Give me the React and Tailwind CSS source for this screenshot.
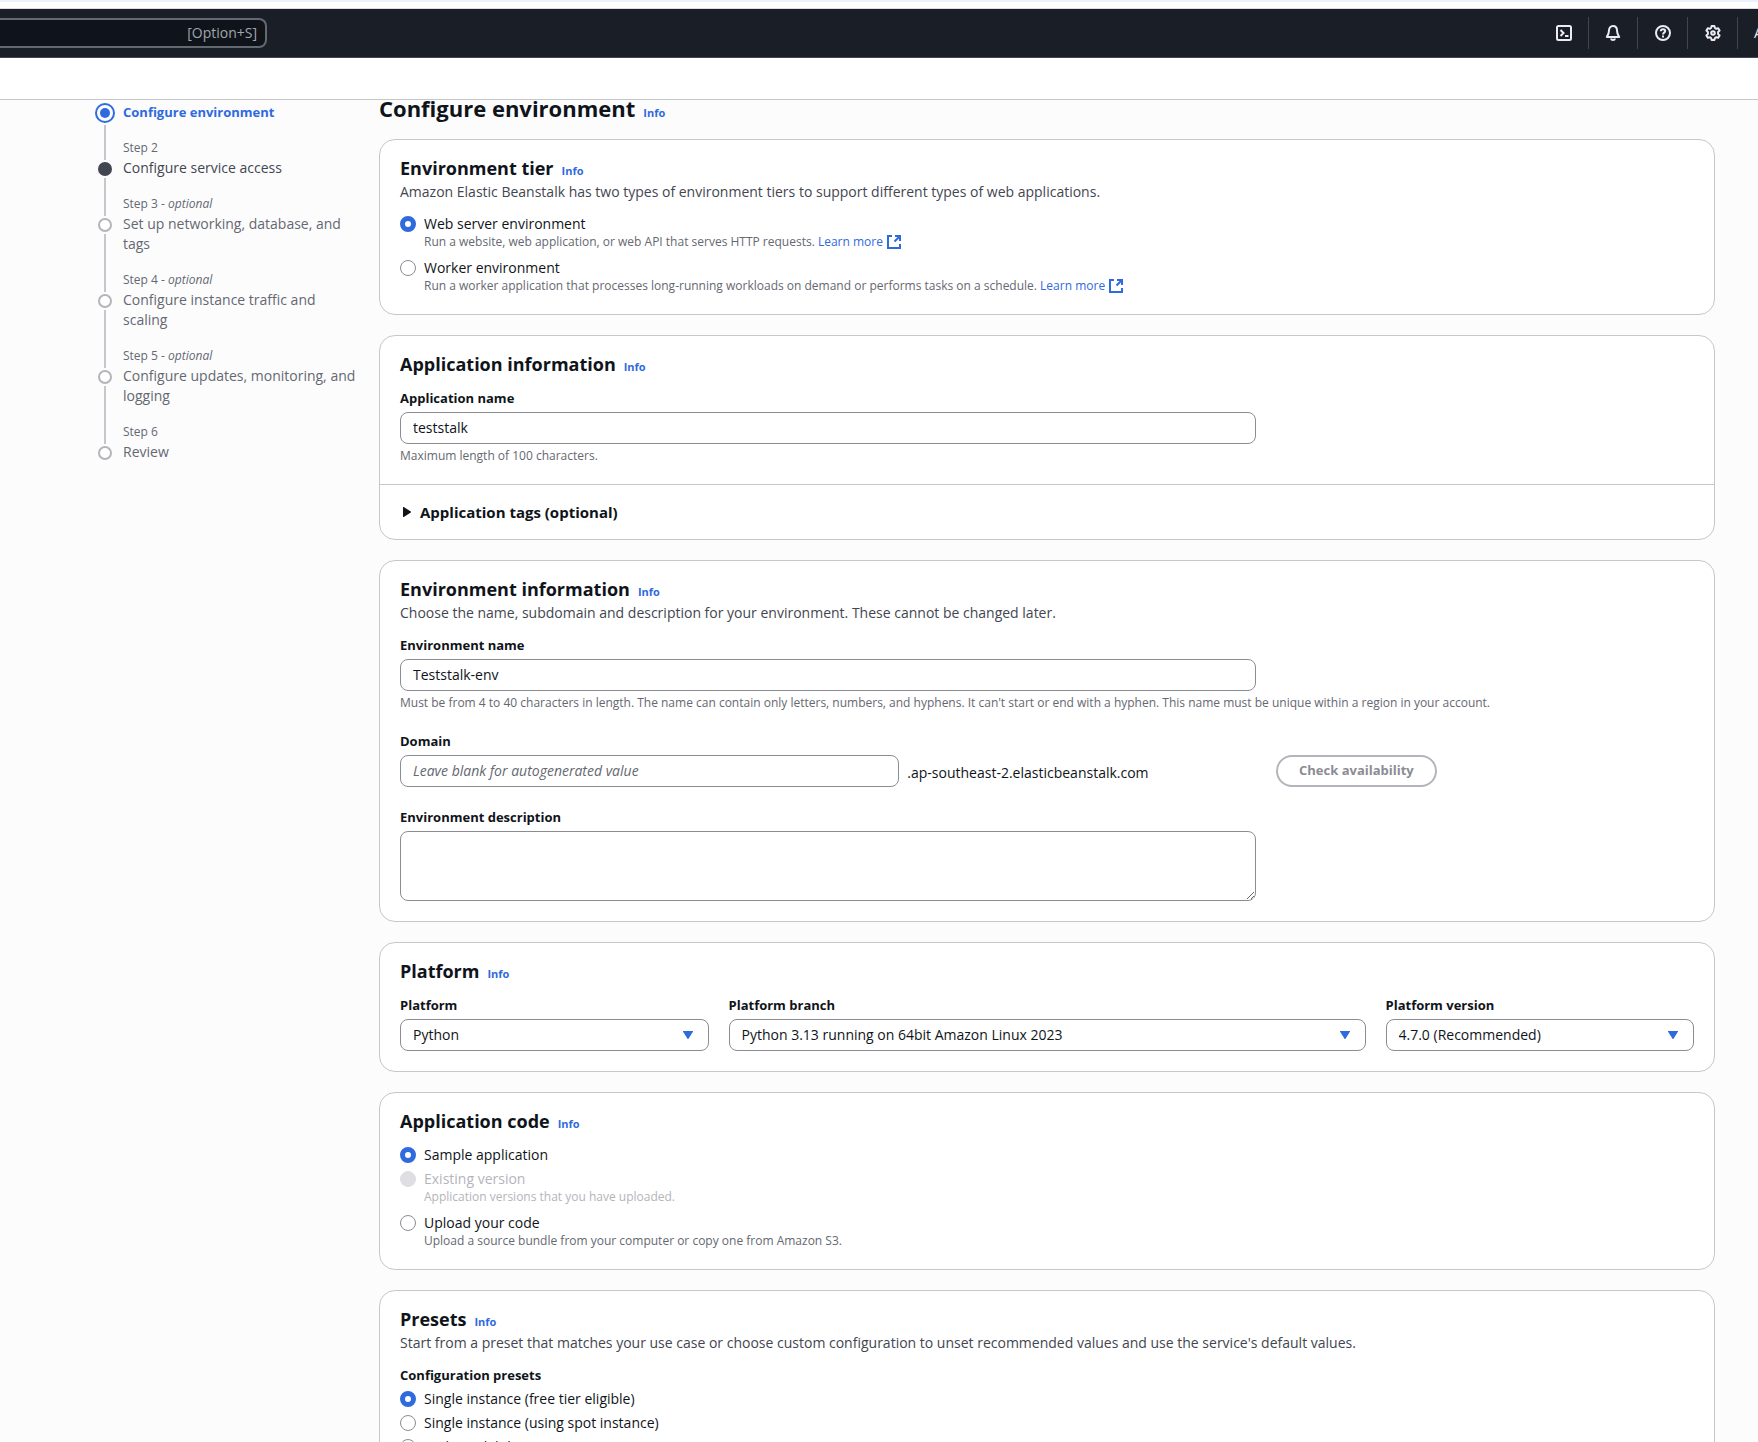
import React, { useState } from "react";
import clsx from "clsx";

const steps = [
  { title: "Configure environment", state: "active" },
  { title: "Configure service access", state: "visited" },
  {
    title: "Set up networking, database, and tags",
    optional: true,
    state: "pending",
  },
  {
    title: "Configure instance traffic and scaling",
    optional: true,
    state: "pending",
  },
  {
    title: "Configure updates, monitoring, and logging",
    optional: true,
    state: "pending",
  },
  { title: "Review", state: "pending" },
];

const presets = [
  { value: "single", label: "Single instance (free tier eligible)" },
  { value: "single-spot", label: "Single instance (using spot instance)" },
  { value: "ha", label: "High availability" },
];

const inputClass =
  "block h-8 w-full rounded-lg border border-[#8c8c94] bg-white px-3 text-sm text-[#0f141a] outline-none placeholder:italic placeholder:text-[#656871] focus:border-[#006ce0]";

const NavButton = ({ label, children }) => (
  <button
    type="button"
    aria-label={label}
    className="flex h-8 w-full items-center justify-center text-[#ebebf0]"
  >
    <svg
      viewBox="0 0 16 16"
      className="size-4"
      fill="none"
      stroke="currentColor"
      strokeWidth="2"
      strokeLinejoin="round"
    >
      {children}
    </svg>
  </button>
);

const TopBar = () => (
  <header className="flex h-[49px] flex-shrink-0 items-center overflow-hidden border-b border-[#424650] bg-[#1a1e27]">
    <label className="flex h-[30px] w-[267px] items-center rounded-r-lg border-2 border-l-0 border-[#656871] bg-[#0f141a] pr-2">
      <input
        type="search"
        aria-label="Search"
        className="min-w-0 flex-1 bg-transparent outline-none"
      />
      <span className="text-sm text-[#a4a4ad]">[Option+S]</span>
    </label>

    <nav className="ml-auto flex items-center">
      <div className="w-[49px]">
        <NavButton label="CloudShell">
          <rect x="1" y="1" width="14" height="14" rx="1.5" />
          <path d="M4.5 5 7.5 8l-3 3" strokeLinejoin="miter" />
          <path d="M9 11h3.5" />
        </NavButton>
      </div>
      <div className="w-[49px] border-l border-[#424650]">
        <NavButton label="Notifications">
          <path d="M8 1C5.400 1 4 3 4 5.500c0 3-.9 4.300-2.200 6.500h12.400C12.900 9.800 12 8.500 12 5.500 12 3 10.600 1 8 1Z" />
          <path d="M6 13.500c.2 1 1 1.500 2 1.500s1.800-.5 2-1.500" />
        </NavButton>
      </div>
      <div className="w-[50px] border-l border-[#424650]">
        <NavButton label="Support">
          <circle cx="8" cy="8" r="7" />
          <path d="M5.800 6.300C5.800 5 6.700 4.300 8 4.300s2.200.7 2.200 1.800C10.200 7.600 8 7.700 8 9.400" />
          <path d="M8 10.600v1.800" />
        </NavButton>
      </div>
      <div className="w-[50px] border-l border-[#424650]">
        <NavButton label="Settings">
          <path d="M6.600 1h2.800l.5 2 1.300.8 2-.6 1.400 2.400L13.100 7v2l1.500 1.400-1.400 2.400-2-.6-1.300.8-.5 2H6.600l-.5-2-1.300-.8-2 .6-1.400-2.400L2.900 9V7L1.400 5.600l1.400-2.400 2 .6L6.100 3Z" />
          <circle cx="8" cy="8" r="1.800" />
        </NavButton>
      </div>
      <div className="w-[21px] overflow-hidden border-l border-[#424650] pl-4">
        <button type="button" className="h-8 text-sm text-[#ebebf0]">
          A
        </button>
      </div>
    </nav>
  </header>
);

const StepMarker = ({ state }) => {
  if (state === "active") {
    return (
      <span className="mb-[2px] flex size-5 items-center justify-center rounded-full border-2 border-[#2f6ade]">
        <span className="size-[10px] rounded-full bg-[#2f6ade]" />
      </span>
    );
  }
  return (
    <span
      className={clsx(
        "my-[2px] size-[14px] rounded-full",
        state === "visited"
          ? "bg-[#424650]"
          : "border-2 border-[#b4b4bb] bg-white",
      )}
    />
  );
};

const StepList = () => (
  <nav aria-label="Steps" className="w-[284px] flex-shrink-0 pt-[2px]">
    <ol>
      {steps.map((step, i) => (
        <li key={step.title} className="flex gap-2">
          <div className="flex w-5 flex-col items-center">
            <span
              className={clsx("w-[2px]", i > 0 ? "h-[22px] bg-[#c6c6cd]" : "h-px")}
            />
            <StepMarker state={step.state} />
            {i < steps.length - 1 && (
              <span className="w-[2px] flex-1 bg-[#c6c6cd]" />
            )}
          </div>
          <div className={clsx("flex-1", i < steps.length - 1 && "pb-4")}>
            {i > 0 && (
              <p className="text-xs leading-5 text-[#656871]">
                Step {i + 1}
                {step.optional && (
                  <>
                    {" - "}
                    <em>optional</em>
                  </>
                )}
              </p>
            )}
            <a
              href="#"
              className={clsx(
                "block w-[236px] leading-5",
                step.state === "active" &&
                  "text-[13px] font-bold text-[#2f6ade]",
                step.state === "visited" && "text-sm text-[#424650]",
                step.state === "pending" && "text-sm text-[#656871]",
              )}
            >
              {step.title}
            </a>
          </div>
        </li>
      ))}
    </ol>
  </nav>
);

const InfoLink = () => (
  <a href="#" className="text-[11px] font-bold text-[#2f6ade]">
    Info
  </a>
);

const LearnMore = () => (
  <a href="#" className="inline-flex items-center gap-[3px] text-[#2f6ade]">
    Learn more
    <svg
      viewBox="0 0 16 16"
      className="size-4"
      fill="none"
      stroke="currentColor"
      strokeWidth="2"
    >
      <path d="M6 2H2v12h12v-4" />
      <path d="M9 2h5v5M14 2 8.500 7.500" />
    </svg>
  </a>
);

const Card = ({ title, description, footer, children }) => (
  <section className="rounded-2xl border border-[#c6c6cd] bg-white">
    <div className="px-5 pt-4 pb-5">
      <div className="flex items-baseline gap-2">
        <h2 className="text-lg leading-6 font-bold">{title}</h2>
        <InfoLink />
      </div>
      {description && (
        <p className="mt-[2px] text-sm leading-5 text-[#424650]">
          {description}
        </p>
      )}
      <div className="mt-3">{children}</div>
    </div>
    {footer}
  </section>
);

const Field = ({ id, label, hint, children }) => (
  <div>
    <label htmlFor={id} className="mb-1 block text-[13px] leading-5 font-bold">
      {label}
    </label>
    {children}
    {hint && <p className="mt-1 text-xs leading-4 text-[#656871]">{hint}</p>}
  </div>
);

const Radio = ({ name, value, label, description, current, onChange, disabled }) => {
  const id = `${name}-${value}`;
  return (
    <div className={clsx("flex gap-2", description ? "mb-2" : "mb-1", "last:mb-0")}>
      <input
        type="radio"
        id={id}
        name={name}
        value={value}
        checked={current === value}
        disabled={disabled}
        onChange={() => onChange(value)}
        className="mt-[2px] size-4 flex-shrink-0 appearance-none rounded-full border border-[#8c8c94] bg-white checked:border-[5px] checked:border-[#2f6ade] disabled:border-[#dedee3] disabled:bg-[#dedee3]"
      />
      <div className={disabled ? "text-[#b4b4bb]" : "text-[#656871]"}>
        <label
          htmlFor={id}
          className={clsx(
            "block text-sm leading-5",
            !disabled && "text-[#0f141a]",
          )}
        >
          {label}
        </label>
        {description && <p className="text-xs leading-4">{description}</p>}
      </div>
    </div>
  );
};

const Select = ({ id, children }) => (
  <div className="relative">
    <select id={id} className={clsx(inputClass, "appearance-none pr-9")}>
      {children}
    </select>
    <svg
      viewBox="0 0 10 8"
      className="pointer-events-none absolute top-3 right-4 h-2 w-[10px] fill-[#2f6ade]"
    >
      <path d="M0.500 0h9a.4.4 0 0 1 .4.700L5.500 7.700a.6.6 0 0 1-1 0L.1.700A.4.4 0 0 1 .500 0Z" />
    </svg>
  </div>
);

const App = () => {
  const [tier, setTier] = useState("web");
  const [code, setCode] = useState("sample");
  const [preset, setPreset] = useState("single");
  const [appName, setAppName] = useState("teststalk");
  const [envName, setEnvName] = useState("Teststalk-env");

  return (
    <div className="flex h-screen flex-col overflow-hidden bg-[#fcfcfd] font-['Open_Sans','Noto_Sans',sans-serif] text-sm text-[#0f141a]">
      <div className="h-[9px] flex-shrink-0 border-t-2 border-b border-t-[#edf1fb] border-b-[#dedee3] bg-white" />
      <TopBar />
      <div className="h-[42px] flex-shrink-0 border-b border-[#c6c6cd] bg-white" />

      <div className="min-h-0 flex-1 overflow-hidden">
        <div className="flex pr-[43px] pl-[95px]">
          <StepList />
          <main className="min-w-0 flex-1">
            {/* heading is scrolled slightly under the toolbar */}
            <div className="-mt-1 mb-[18px] flex items-baseline gap-2">
              <h1 className="text-[22px] leading-6 font-bold">
                Configure environment
              </h1>
              <InfoLink />
            </div>

            <div className="flex flex-col gap-5">
              <Card
                title="Environment tier"
                description="Amazon Elastic Beanstalk has two types of environment tiers to support different types of web applications."
              >
                <Radio
                  name="tier"
                  value="web"
                  current={tier}
                  onChange={setTier}
                  label="Web server environment"
                  description={
                    <>
                      Run a website, web application, or web API that serves
                      HTTP requests. <LearnMore />
                    </>
                  }
                />
                <Radio
                  name="tier"
                  value="worker"
                  current={tier}
                  onChange={setTier}
                  label="Worker environment"
                  description={
                    <>
                      Run a worker application that processes long-running
                      workloads on demand or performs tasks on a schedule.{" "}
                      <LearnMore />
                    </>
                  }
                />
              </Card>

              <Card
                title="Application information"
                footer={
                  <div className="border-t border-[#c6c6cd] px-5 py-[15px]">
                    <button
                      type="button"
                      aria-expanded="false"
                      className="flex items-center gap-2 text-[15px] leading-6 font-bold"
                    >
                      <svg
                        viewBox="0 0 12 12"
                        className="size-3 fill-[#0f141a]"
                      >
                        <path d="M3 1.500a.5.5 0 0 1 .8-.4l7 4.500a.5.5 0 0 1 0 .8l-7 4.500a.5.5 0 0 1-.8-.4Z" />
                      </svg>
                      Application tags (optional)
                    </button>
                  </div>
                }
              >
                <Field
                  id="app-name"
                  label="Application name"
                  hint="Maximum length of 100 characters."
                >
                  <div className="grid grid-cols-12 gap-5">
                    <div className="col-span-8">
                      <input
                        id="app-name"
                        type="text"
                        className={inputClass}
                        value={appName}
                        onChange={(e) => setAppName(e.target.value)}
                      />
                    </div>
                  </div>
                </Field>
              </Card>

              <Card
                title="Environment information"
                description="Choose the name, subdomain and description for your environment. These cannot be changed later."
              >
                <div className="flex flex-col gap-5">
                  <Field
                    id="env-name"
                    label="Environment name"
                    hint="Must be from 4 to 40 characters in length. The name can contain only letters, numbers, and hyphens. It can't start or end with a hyphen. This name must be unique within a region in your account."
                  >
                    <div className="grid grid-cols-12 gap-5">
                      <div className="col-span-8">
                        <input
                          id="env-name"
                          type="text"
                          className={inputClass}
                          value={envName}
                          onChange={(e) => setEnvName(e.target.value)}
                        />
                      </div>
                    </div>
                  </Field>

                  <Field id="domain" label="Domain">
                    <div className="grid grid-cols-12 gap-5">
                      <div className="col-span-8 flex items-center gap-2">
                        <div className="w-7/12">
                          <input
                            id="domain"
                            type="text"
                            className={inputClass}
                            placeholder="Leave blank for autogenerated value"
                          />
                        </div>
                        <span className="pt-1">
                          .ap-southeast-2.elasticbeanstalk.com
                        </span>
                      </div>
                      <div className="col-span-4">
                        <button
                          type="button"
                          disabled
                          className="h-8 rounded-full border-2 border-[#b4b4bb] px-[21px] text-[13px] font-bold text-[#8c8c94]"
                        >
                          Check availability
                        </button>
                      </div>
                    </div>
                  </Field>

                  <Field id="env-desc" label="Environment description">
                    <div className="grid grid-cols-12 gap-5">
                      <div className="col-span-8">
                        <textarea
                          id="env-desc"
                          className="block h-[70px] w-full rounded-lg border border-[#8c8c94] bg-white px-3 py-1 outline-none"
                        />
                      </div>
                    </div>
                  </Field>
                </div>
              </Card>

              <Card title="Platform">
                <div className="grid grid-cols-12 gap-5">
                  <div className="col-span-3">
                    <Field id="platform" label="Platform">
                      <Select id="platform">
                        <option>Python</option>
                      </Select>
                    </Field>
                  </div>
                  <div className="col-span-6">
                    <Field id="branch" label="Platform branch">
                      <Select id="branch">
                        <option>
                          Python 3.13 running on 64bit Amazon Linux 2023
                        </option>
                      </Select>
                    </Field>
                  </div>
                  <div className="col-span-3">
                    <Field id="version" label="Platform version">
                      <Select id="version">
                        <option>4.7.0 (Recommended)</option>
                      </Select>
                    </Field>
                  </div>
                </div>
              </Card>

              <Card title="Application code">
                <Radio
                  name="code"
                  value="sample"
                  current={code}
                  onChange={setCode}
                  label="Sample application"
                />
                <Radio
                  name="code"
                  value="existing"
                  current={code}
                  onChange={setCode}
                  disabled
                  label="Existing version"
                  description="Application versions that you have uploaded."
                />
                <Radio
                  name="code"
                  value="upload"
                  current={code}
                  onChange={setCode}
                  label="Upload your code"
                  description="Upload a source bundle from your computer or copy one from Amazon S3."
                />
              </Card>

              <Card
                title="Presets"
                description="Start from a preset that matches your use case or choose custom configuration to unset recommended values and use the service's default values."
              >
                <fieldset>
                  <legend className="mb-1 text-[13px] leading-5 font-bold">
                    Configuration presets
                  </legend>
                  {presets.map((p) => (
                    <Radio
                      key={p.value}
                      name="preset"
                      value={p.value}
                      label={p.label}
                      current={preset}
                      onChange={setPreset}
                    />
                  ))}
                </fieldset>
              </Card>
            </div>
          </main>
        </div>
      </div>
    </div>
  );
};

export default App;
